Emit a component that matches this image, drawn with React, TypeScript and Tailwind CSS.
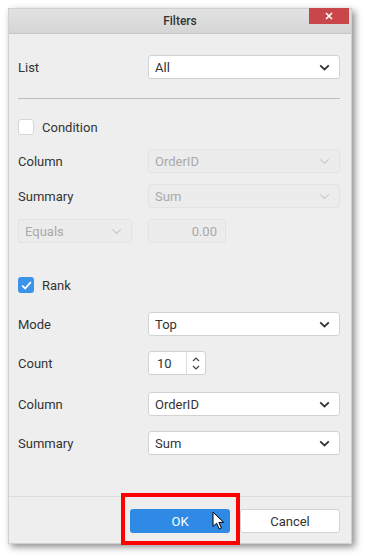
import React from 'react';

const Chevron = ({ disabled = false }: { disabled?: boolean }) => (
  <svg width="11" height="7" viewBox="0 0 11 7" className="shrink-0">
    <path
      d="M1.2 1.4 L5.5 5.4 L9.8 1.4"
      fill="none"
      stroke={disabled ? '#c9c9c9' : '#333333'}
      strokeWidth={disabled ? 1.2 : 1.8}
    />
  </svg>
);

const Select = ({ value, disabled = false, className = '' }: { value: string; disabled?: boolean; className?: string }) => (
  <div
    className={`h-[24px] flex items-center justify-between pl-[6px] pr-[9px] rounded-[3px] border text-[13px] leading-none ${
      disabled ? 'bg-[#ececec] border-[#e3e3e3] text-[#a9a9a9]' : 'bg-white border-[#d2d2d2] text-[#333333]'
    } ${className}`}
  >
    <span>{value}</span>
    <Chevron disabled={disabled} />
  </div>
);

const Row = ({ label, children, className = '' }: { label: string; children: React.ReactNode; className?: string }) => (
  <div className={`h-[24px] flex items-center ${className}`}>
    <div className="w-[130px] shrink-0 text-[13px] leading-none text-[#333333]">{label}</div>
    <div className="flex-1">{children}</div>
  </div>
);

const Checkbox = ({ checked, label, className = '' }: { checked: boolean; label: string; className?: string }) => (
  <div className={`h-[16px] flex items-center ${className}`}>
    {checked ? (
      <div className="w-[16px] h-[16px] rounded-[3px] bg-[#3d93ea] flex items-center justify-center">
        <svg width="11" height="9" viewBox="0 0 11 9">
          <path d="M1.2 4.6 L4.2 7.5 L9.8 1.2" fill="none" stroke="#ffffff" strokeWidth="1.8" />
        </svg>
      </div>
    ) : (
      <div className="w-[16px] h-[16px] rounded-[3px] bg-white border border-[#d6d6d6]" />
    )}
    <span className="ml-[8px] text-[13px] leading-none text-[#333333]">{label}</span>
  </div>
);

const Cursor = () => (
  <svg width="13" height="19" viewBox="0 0 13 19">
    <path d="M1 1 L1 15.5 L4.6 12.3 L7.2 18 L9.4 17 L6.9 11.4 L11.6 11.4 Z" fill="#ffffff" stroke="#000000" strokeWidth="1" strokeLinejoin="round" />
  </svg>
);

const App = () => {
  return (
    <div
      className="w-[366px] h-[558px] bg-white pt-[8px] pl-[8px]"
      style={{ fontFamily: 'Roboto, "Liberation Sans", sans-serif' }}
    >
      <div className="w-[344px] bg-[#eeeeee] border border-[#d0d0d0] shadow-[3px_3px_7px_rgba(0,0,0,0.45)]">
        <div className="relative h-[25px] bg-gradient-to-b from-[#e2e2e2] to-[#d5d5d5] border-b border-[#c4c4c4] flex items-center justify-center">
          <span className="text-[12px] leading-none font-medium text-[#333333]">Filters</span>
          <div className="absolute right-[2px] top-[-1px] w-[40px] h-[16px] bg-[#c9464b] flex items-center justify-center">
            <svg width="8" height="8" viewBox="0 0 8 8">
              <path d="M1 1 L7 7 M7 1 L1 7" stroke="#ffffff" strokeWidth="1.6" />
            </svg>
          </div>
        </div>

        <div className="pl-[9px] pr-[11px] pt-[21px]">
          <Row label="List">
            <Select value="All" />
          </Row>
          <div className="mt-[19px] h-px bg-[#bdbdbd]" />

          <Checkbox checked={false} label="Condition" className="mt-[20px]" />
          <Row label="Column" className="mt-[14px]">
            <Select value="OrderID" disabled />
          </Row>
          <Row label="Summary" className="mt-[11px]">
            <Select value="Sum" disabled />
          </Row>
          <div className="flex items-center mt-[11px]">
            <Select value="Equals" disabled className="w-[114px]" />
            <div className="ml-[16px] w-[78px] h-[24px] rounded-[3px] border border-[#e3e3e3] bg-[#ececec] text-[13px] leading-none text-[#a9a9a9] flex items-center justify-end pr-[8px]">
              0.00
            </div>
          </div>

          <Checkbox checked label="Rank" className="mt-[34px]" />
          <Row label="Mode" className="mt-[19px]">
            <Select value="Top" />
          </Row>
          <Row label="Count" className="mt-[15px]">
            <div className="w-[58px] h-[24px] flex rounded-[3px] border border-[#d2d2d2] bg-white">
              <div className="flex-1 flex items-center pl-[8px] text-[13px] leading-none text-[#333333]">10</div>
              <div className="w-[19px] border-l border-[#dddddd] flex flex-col items-center justify-center gap-[3px]">
                <svg width="8" height="5" viewBox="0 0 8 5">
                  <path d="M1 4 L4 1 L7 4" fill="none" stroke="#444444" strokeWidth="1.2" />
                </svg>
                <svg width="8" height="5" viewBox="0 0 8 5">
                  <path d="M1 1 L4 4 L7 1" fill="none" stroke="#444444" strokeWidth="1.2" />
                </svg>
              </div>
            </div>
          </Row>
          <Row label="Column" className="mt-[17px]">
            <Select value="OrderID" />
          </Row>
          <Row label="Summary" className="mt-[15px]">
            <Select value="Sum" />
          </Row>
        </div>

        <div className="mt-[41px] border-t border-[#dcdcdc] pt-[12px] pb-[10px] pr-[11px] flex justify-end gap-[10px]">
          <div className="relative">
            <div className="w-[100px] h-[24px] rounded-[3px] bg-[#2f8ae5] text-white text-[13px] leading-none flex items-center justify-center">
              OK
            </div>
            <div className="absolute left-[-9px] top-[-16px] w-[119px] h-[52px] border-[4px] border-[#ff0000]" />
            <div className="absolute left-[82px] top-[2px]">
              <Cursor />
            </div>
          </div>
          <div className="w-[100px] h-[24px] rounded-[3px] bg-white border border-[#d2d2d2] text-[#333333] text-[13px] leading-none flex items-center justify-center">
            Cancel
          </div>
        </div>
      </div>
    </div>
  );
};

export default App;
